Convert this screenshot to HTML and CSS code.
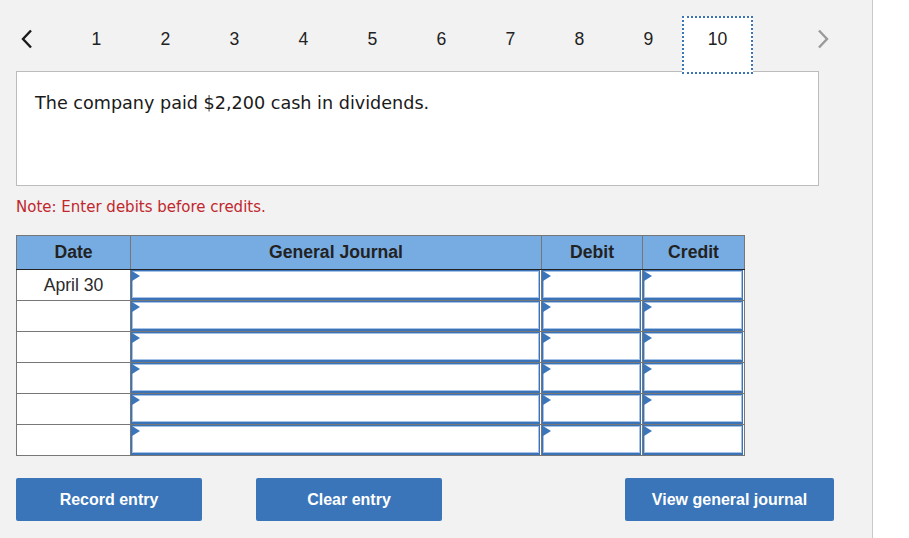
FILE: index.html
```html
<!DOCTYPE html>
<html lang="en">
<head>
<meta charset="utf-8">
<title>General Journal</title>
<link rel="stylesheet" href="styles.css">
</head>
<body>
<div class="page">
  <nav class="pager">
    <span class="arrow arrow-prev">
      <svg width="14" height="22" viewBox="0 0 14 22"><polyline points="11,2.5 3,11 11,19.5" fill="none" stroke="#1a1a1a" stroke-width="2.4"/></svg>
    </span>
    <span class="page-num">1</span>
    <span class="page-num">2</span>
    <span class="page-num">3</span>
    <span class="page-num">4</span>
    <span class="page-num">5</span>
    <span class="page-num">6</span>
    <span class="page-num">7</span>
    <span class="page-num">8</span>
    <span class="page-num">9</span>
    <span class="page-num current">10</span>
    <span class="arrow arrow-next">
      <svg width="14" height="22" viewBox="0 0 14 22"><polyline points="3,2.5 11,11 3,19.5" fill="none" stroke="#9a9a9a" stroke-width="2.4"/></svg>
    </span>
  </nav>

  <div class="question">
    <p>The company paid $2,200 cash in dividends.</p>
  </div>

  <p class="note">Note: Enter debits before credits.</p>

  <table class="journal">
    <colgroup>
      <col class="c-date">
      <col class="c-gj">
      <col class="c-debit">
      <col class="c-credit">
    </colgroup>
    <thead>
      <tr><th>Date</th><th>General Journal</th><th>Debit</th><th>Credit</th></tr>
    </thead>
    <tbody>
      <tr><td class="date">April 30</td><td class="in"><div class="field"></div></td><td class="in"><div class="field"></div></td><td class="in"><div class="field"></div></td></tr>
      <tr><td class="date"></td><td class="in"><div class="field"></div></td><td class="in"><div class="field"></div></td><td class="in"><div class="field"></div></td></tr>
      <tr><td class="date"></td><td class="in"><div class="field"></div></td><td class="in"><div class="field"></div></td><td class="in"><div class="field"></div></td></tr>
      <tr><td class="date"></td><td class="in"><div class="field"></div></td><td class="in"><div class="field"></div></td><td class="in"><div class="field"></div></td></tr>
      <tr><td class="date"></td><td class="in"><div class="field"></div></td><td class="in"><div class="field"></div></td><td class="in"><div class="field"></div></td></tr>
      <tr><td class="date"></td><td class="in"><div class="field"></div></td><td class="in"><div class="field"></div></td><td class="in"><div class="field"></div></td></tr>
    </tbody>
  </table>

  <div class="actions">
    <button class="btn btn-record">Record entry</button>
    <button class="btn btn-clear">Clear entry</button>
    <button class="btn btn-view">View general journal</button>
  </div>
</div>
</body>
</html>
```

FILE: styles.css
```css
html, body {
  margin: 0;
  padding: 0;
  background: #ffffff;
}

body {
  font-family: "Liberation Sans", Arial, sans-serif;
  color: #222222;
}

.page {
  width: 873px;
  min-height: 538px;
  box-sizing: border-box;
  padding: 0 16px;
  background: #f2f2f2;
  border-right: 1px solid #c9c9c9;
}

/* pager */
.pager {
  display: flex;
  align-items: flex-start;
  height: 71px;
}

.arrow {
  display: flex;
  align-items: center;
  height: 58px;
  margin-top: 16px;
}

.arrow svg {
  display: block;
  margin-top: -12px;
}

.arrow-prev {
  width: 46px;
  padding-left: 4px;
  box-sizing: border-box;
}

.arrow-next {
  margin-left: 64px;
}

.page-num {
  width: 69px;
  height: 58px;
  margin-top: 16px;
  box-sizing: border-box;
  padding-top: 13px;
  text-align: center;
  font-size: 17.6px;
  line-height: 20px;
  color: #222222;
}

.page-num.current {
  position: relative;
  z-index: 1;
  width: 71px;
  margin-left: -1px;
  margin-right: -1px;
  background: #ffffff;
  border: 2px dotted #3b74b8;
  padding-top: 11px;
}

/* question */
.question {
  width: 803px;
  height: 115px;
  box-sizing: border-box;
  background: #ffffff;
  border: 1px solid #bcbcbc;
  padding: 21px 18px 0;
}

.question p {
  margin: 0;
  font-family: "DejaVu Sans", Verdana, sans-serif;
  font-size: 17.6px;
  line-height: 20px;
  color: #1a1a1a;
}

.note {
  margin: 11px 0 18px;
  font-family: "DejaVu Sans", Verdana, sans-serif;
  font-size: 15px;
  line-height: 20px;
  color: #c1272d;
}

/* journal table */
.journal {
  border-collapse: collapse;
  table-layout: fixed;
  width: 729px;
  background: #ffffff;
}

.c-date { width: 114px; }
.c-gj { width: 411px; }
.c-debit { width: 101px; }
.c-credit { width: 102px; }

.journal th {
  height: 33px;
  padding: 0;
  background: #77ace3;
  border: 1px solid #777777;
  border-bottom: 1px solid #222222;
  border-left-color: #2a2a2a;
  font-weight: bold;
  font-size: 17.6px;
  color: #222222;
  text-align: center;
  vertical-align: middle;
}

.journal th:first-child {
  border-left-color: #777777;
}

.journal td {
  height: 30px;
  padding: 0;
  border: 1px solid #777777;
}

.journal td.date {
  text-align: center;
  font-size: 17.6px;
  line-height: 20px;
  color: #2a2a2a;
  vertical-align: top;
  padding-top: 5px;
  height: 25px;
}

.journal td.in {
  padding: 0 1px 0 0;
  vertical-align: top;
}

.field {
  position: relative;
  height: 30px;
  box-sizing: border-box;
  background: #ffffff;
  border: 1px solid #3a73b8;
  border-bottom-width: 2px;
  box-shadow: inset 0 0 0 1px #a6c3e7;
}

.field::before {
  content: "";
  position: absolute;
  top: 0;
  left: 0;
  width: 0;
  height: 0;
  border-left: 8px solid #3b76bb;
  border-top: 5px solid transparent;
  border-bottom: 5px solid transparent;
}

/* buttons */
.actions {
  display: flex;
  margin-top: 22px;
}

.btn {
  height: 43px;
  border: none;
  border-radius: 2px;
  background: #3a75b9;
  color: #ffffff;
  font-family: "Liberation Sans", Arial, sans-serif;
  font-weight: bold;
  font-size: 16px;
  padding: 0;
  cursor: pointer;
}

.btn-record { width: 186px; }
.btn-clear { width: 186px; margin-left: 54px; }
.btn-view { width: 209px; margin-left: 183px; }
```
